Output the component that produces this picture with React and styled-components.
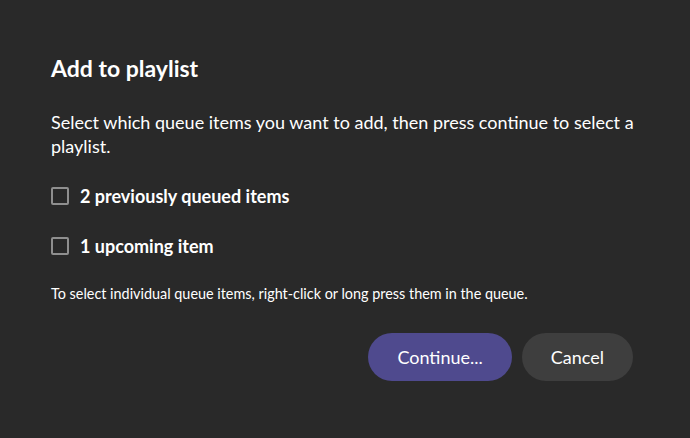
import React, { useState } from "react";
import styled, { createGlobalStyle } from "styled-components";

const GlobalStyle = createGlobalStyle`
  html, body {
    margin: 0;
    padding: 0;
    background: #292929;
  }
  body {
    font-family: Lato, "Noto Sans", "Liberation Sans", sans-serif;
    color: #ffffff;
    -webkit-font-smoothing: antialiased;
  }
`;

const App = () => {
  const [checked, setChecked] = useState({ previous: false, upcoming: false });

  const toggle = (key) => setChecked((c) => ({ ...c, [key]: !c[key] }));

  return (
    <>
      <GlobalStyle />
      <Dialog>
        <Title>Add to playlist</Title>
        <Description>
          Select which queue items you want to add, then press continue to
          select a playlist.
        </Description>
        <OptionList>
          <OptionRow onClick={() => toggle("previous")}>
            <CheckBox $checked={checked.previous} />
            <OptionLabel>2 previously queued items</OptionLabel>
          </OptionRow>
          <OptionRow onClick={() => toggle("upcoming")}>
            <CheckBox $checked={checked.upcoming} />
            <OptionLabel>1 upcoming item</OptionLabel>
          </OptionRow>
        </OptionList>
        <HintText>
          To select individual queue items, right-click or long press them in
          the queue.
        </HintText>
        <ButtonRow>
          <DialogButton $primary>Continue...</DialogButton>
          <DialogButton>Cancel</DialogButton>
        </ButtonRow>
      </Dialog>
    </>
  );
};

export default App;

const Dialog = styled.div`
  width: 690px;
  height: 438px;
  box-sizing: border-box;
  padding: 53px 51px 0 51px;
  display: flex;
  flex-direction: column;
`;

const Title = styled.h2`
  margin: 0;
  font-size: 23px;
  line-height: 30px;
  font-weight: 700;
`;

const Description = styled.p`
  margin: 27px 0 0 0;
  font-size: 18px;
  line-height: 24px;
  font-weight: 400;
`;

const OptionList = styled.div`
  display: flex;
  flex-direction: column;
  gap: 10px;
  margin-top: 18px;
`;

const OptionRow = styled.label`
  display: flex;
  align-items: center;
  height: 40px;
  gap: 11px;
  cursor: pointer;
`;

const CheckBox = styled.span`
  width: 18px;
  height: 18px;
  box-sizing: border-box;
  border: 2px solid #8f8f8f;
  border-radius: 2px;
  background: ${(p) => (p.$checked ? "#8f8f8f" : "transparent")};
  flex-shrink: 0;
`;

const OptionLabel = styled.span`
  font-size: 18px;
  font-weight: 700;
  line-height: 24px;
`;

const HintText = styled.p`
  margin: 18px 0 0 0;
  font-size: 14.4px;
  line-height: 20px;
`;

const ButtonRow = styled.div`
  display: flex;
  justify-content: flex-end;
  gap: 10px;
  margin-top: 29px;
  margin-right: 6px;
`;

const DialogButton = styled.button`
  height: 48px;
  padding: 0 29px;
  border: none;
  border-radius: 24px;
  font-family: inherit;
  font-size: 18px;
  color: #ffffff;
  background: ${(p) => (p.$primary ? "#4f4a8e" : "#3e3e3e")};
  cursor: pointer;
`;
